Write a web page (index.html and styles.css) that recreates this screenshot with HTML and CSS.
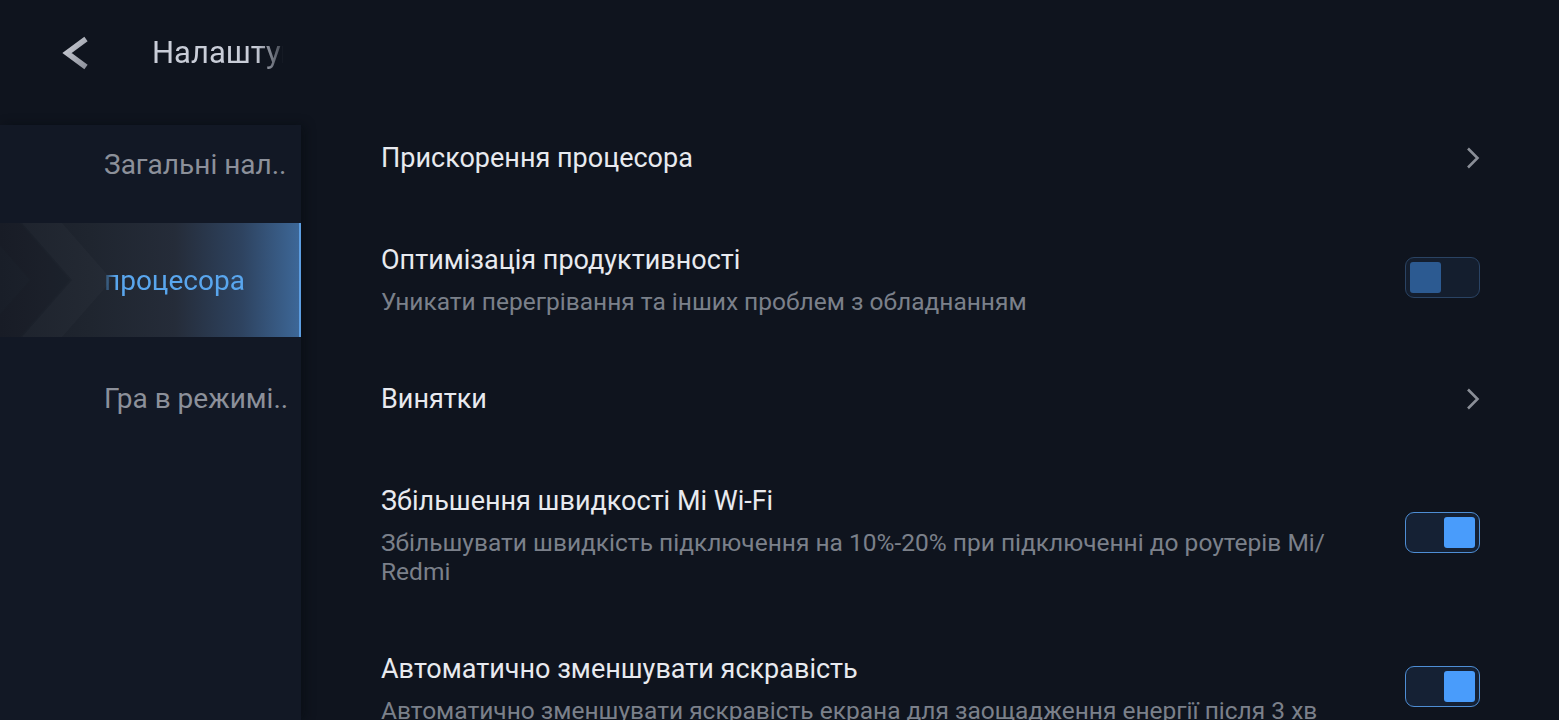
FILE: index.html
```html
<!DOCTYPE html>
<html lang="uk">
<head>
<meta charset="utf-8">
<title>Налаштування</title>
<link rel="stylesheet" href="styles.css">
</head>
<body>
<div class="page">
  <header class="header">
    <svg class="back" width="30" height="34" viewBox="0 0 30 34">
      <defs>
        <linearGradient id="bg1" x1="0" y1="0" x2="1" y2="1">
          <stop offset="0" stop-color="#c9ccd4"/>
          <stop offset="1" stop-color="#8e929c"/>
        </linearGradient>
      </defs>
      <path d="M25 3 L6 17 L25 31" fill="none" stroke="url(#bg1)" stroke-width="5.5" stroke-linejoin="miter"/>
    </svg>
    <div class="title-clip"><span class="title">Налаштування</span></div>
  </header>
  <div class="body">
    <nav class="sidebar">
      <div class="nav-item first"><span class="nav-text">Загальні нал..</span></div>
      <div class="nav-item selected">
        <svg class="marks" width="140" height="114" viewBox="0 0 140 114">
          <polygon points="22,0 62,0 112,57 62,114 22,114 72,57" fill="#ffffff" fill-opacity="0.02"/>
          <polygon points="-20,0 20,0 70,57 20,114 -20,114 30,57" fill="#000000" fill-opacity="0.035"/>
        </svg>
        <span class="nav-text sel-text">процесора</span>
      </div>
      <div class="nav-item"><span class="nav-text">Гра в режимі..</span></div>
    </nav>
    <main class="main">
      <div class="row">
        <div class="texts"><div class="r-title">Прискорення процесора</div></div>
        <svg class="chev" width="14" height="22" viewBox="0 0 14 22"><path d="M2 1.5 L11.5 11 L2 20.5" fill="none" stroke="#8a8e97" stroke-width="2.6"/></svg>
      </div>
      <div class="row">
        <div class="texts">
          <div class="r-title">Оптимізація продуктивності</div>
          <div class="r-sub">Уникати перегрівання та інших проблем з обладнанням</div>
        </div>
        <div class="toggle off"><div class="knob"></div></div>
      </div>
      <div class="row">
        <div class="texts"><div class="r-title">Винятки</div></div>
        <svg class="chev" width="14" height="22" viewBox="0 0 14 22"><path d="M2 1.5 L11.5 11 L2 20.5" fill="none" stroke="#8a8e97" stroke-width="2.6"/></svg>
      </div>
      <div class="row">
        <div class="texts">
          <div class="r-title">Збільшення швидкості Mi Wi-Fi</div>
          <div class="r-sub">Збільшувати швидкість підключення на 10%-20% при підключенні до роутерів Mi/<wbr>Redmi</div>
        </div>
        <div class="toggle on"><div class="knob"></div></div>
      </div>
      <div class="row">
        <div class="texts">
          <div class="r-title">Автоматично зменшувати яскравість</div>
          <div class="r-sub">Автоматично зменшувати яскравість екрана для заощадження енергії після 3 хв</div>
        </div>
        <div class="toggle on"><div class="knob"></div></div>
      </div>
    </main>
  </div>
</div>
</body>
</html>
```
FILE: styles.css
```css
* { box-sizing: border-box; }
html, body {
  margin: 0;
  padding: 0;
  background: #0f141e;
  height: 720px;
  overflow: hidden;
}
.page {
  font-family: Roboto, "Noto Sans", "DejaVu Sans", sans-serif;
  width: 1559px;
  height: 720px;
  overflow: hidden;
  display: flex;
  flex-direction: column;
}
.header {
  height: 106px;
  flex: none;
  display: flex;
  align-items: center;
  padding-left: 61px;
}
.back {
  display: block;
  margin-top: -1px;
}
.title-clip {
  margin-left: 61px;
  width: 131px;
  overflow: hidden;
  white-space: nowrap;
  -webkit-mask-image: linear-gradient(to right, #000 0, #000 104px, rgba(0,0,0,0.25) 131px);
  mask-image: linear-gradient(to right, #000 0, #000 104px, rgba(0,0,0,0.25) 131px);
}
.title {
  font-size: 31px;
  color: #c9cdd8;
  line-height: 40px;
}
.body {
  flex: 1;
  display: flex;
  min-height: 0;
}
.sidebar {
  width: 301px;
  flex: none;
  margin-top: 19px;
  background: #121825;
  box-shadow: 4px 0 10px rgba(5, 8, 14, 0.45);
  position: relative;
  z-index: 1;
}
.nav-item {
  height: 117px;
  display: flex;
  align-items: center;
  padding-left: 104px;
  position: relative;
}
.nav-item.first {
  height: 98px;
  padding-bottom: 20px;
}
.nav-item.selected {
  height: 114px;
  margin-bottom: 3px;
  background: linear-gradient(to right, #191e28 0, #1f252f 90px, #252c39 175px, #2e4360 242px, #3d6797 299px);
  border-right: 2px solid #5c9de0;
}
.marks {
  position: absolute;
  left: 0;
  top: 0;
}
.nav-text {
  font-size: 28px;
  color: #8c909a;
  white-space: nowrap;
  position: relative;
}
.sel-text {
  color: #59a6ee;
  -webkit-mask-image: linear-gradient(to right, rgba(0,0,0,0.15) 0, #000 12px);
  mask-image: linear-gradient(to right, rgba(0,0,0,0.15) 0, #000 12px);
}
.main {
  flex: 1;
  padding: 1px 79px 0 80px;
}
.row {
  display: flex;
  align-items: center;
  padding: 32.5px 0;
}
.texts {
  flex: 1;
  padding-right: 60px;
  min-width: 0;
}
.r-title {
  font-size: 27px;
  line-height: 37px;
  color: #e8eaef;
}
.r-sub {
  font-size: 24.5px;
  line-height: 29px;
  margin-top: 8px;
  color: #7b808a;
}
.chev {
  display: block;
  flex: none;
}
.toggle {
  flex: none;
  width: 75px;
  height: 41px;
  border-radius: 9px;
  padding: 4px;
  display: flex;
  margin-top: -3px;
}
.toggle .knob {
  width: 31px;
  height: 31px;
  border-radius: 3px;
}
.toggle.off {
  border: 1.5px solid #2a4363;
  background: #141e2e;
}
.toggle.off .knob {
  background: #2c5a91;
}
.toggle.on {
  border: 1.5px solid #4e8ed5;
  background: #152134;
  justify-content: flex-end;
}
.toggle.on .knob {
  background: #499cfb;
}
```
